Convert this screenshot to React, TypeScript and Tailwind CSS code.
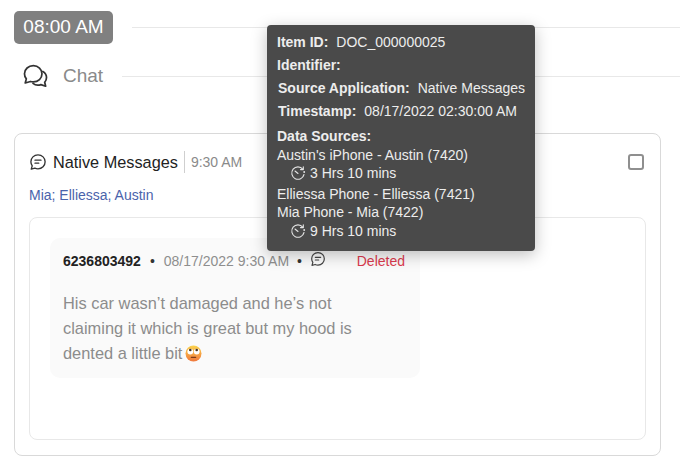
const font = { fontFamily: '"Liberation Sans", Arial, sans-serif' };

function MsgIcon({ size = 17, className = "" }: { size?: number; className?: string }) {
  return (
    <svg width={size} height={size} viewBox="0 0 24 24" fill="none" stroke="currentColor" strokeWidth="1.8" strokeLinecap="round" strokeLinejoin="round" className={className}>
      <path d="M12 2.500c5.400 0 9.500 4 9.500 9.300s-4.100 9.300-9.500 9.300c-1.500 0-2.900-.3-4.200-.9L3 21.500l1.300-4.400c-1.100-1.500-1.800-3.300-1.800-5.300 0-5.300 4.100-9.300 9.500-9.300z" />
      <path d="M8 9.500h8M8 13.500h5" />
    </svg>
  );
}

function ChatsIcon() {
  return (
    <svg width="27" height="27" viewBox="0 0 25 25" fill="none" stroke="#333" strokeWidth="1.600" strokeLinecap="round" strokeLinejoin="round" className="shrink-0">
      <path d="M10.500 2.500c4.500 0 8 3.200 8 7.500s-3.500 7.500-8 7.500c-1 0-1.900-.1-2.700-.4L3 18.500l1-3.800C2.900 13.400 2.300 11.800 2.300 10c0-4.300 3.700-7.500 8.200-7.500z" />
      <path d="M19.300 7.800c2.100 1.200 3.400 3.300 3.400 5.700 0 1.700-.6 3.200-1.700 4.400l.9 3.600-4.400-1.500c-2.700.9-5.500.4-7.300-1.200" />
    </svg>
  );
}

function TimerIcon() {
  return (
    <svg width="16" height="16" viewBox="0 0 16 16" fill="none" stroke="#e4e4e4" strokeWidth="1.100" strokeLinecap="round" strokeLinejoin="round">
      <path d="M12.800 4.200A6.200 6.200 0 1 0 14 9.500" />
      <path d="M13.300 1.800v2.800h-2.800" />
      <path d="M5 6l3 2.500" />
      <circle cx="14.200" cy="7" r=".4" fill="#e4e4e4" />
    </svg>
  );
}

function RollEyes() {
  return (
    <svg width="17" height="17" viewBox="0 0 17 17" className="ml-[3px] inline-block align-[-3px]">
      <defs>
        <linearGradient id="f" x1="0" y1="0" x2="0" y2="1">
          <stop offset="0" stopColor="#fbd34d" />
          <stop offset="1" stopColor="#f0783c" />
        </linearGradient>
      </defs>
      <circle cx="8.500" cy="8.500" r="8" fill="url(#f)" />
      <circle cx="5.300" cy="6.600" r="2.900" fill="#fff" />
      <circle cx="11.700" cy="6.600" r="2.900" fill="#fff" />
      <circle cx="5.300" cy="5" r="1.300" fill="#4a3520" />
      <circle cx="11.700" cy="5" r="1.300" fill="#4a3520" />
      <path d="M6.300 12.300h4.400" stroke="#7a3a1c" strokeWidth="1.200" strokeLinecap="round" />
    </svg>
  );
}

function Field({ label, value, className = "" }: { label: string; value?: string; className?: string }) {
  return (
    <div className={`flex h-[23px] items-center whitespace-nowrap ${className}`}>
      <span className="font-bold">{label}</span>
      {value && <span className="ml-[8px]">{value}</span>}
    </div>
  );
}

function Duration({ text }: { text: string }) {
  return (
    <div className="flex h-[18px] items-center gap-[4px] pl-[13px]">
      <TimerIcon />
      <span>{text}</span>
    </div>
  );
}

export default function App() {
  return (
    <div style={font} className="relative h-[465px] w-[680px] overflow-hidden bg-white">
      <div className="flex h-[55px] items-start pl-[14px] pt-[11px]">
        <div className="flex h-[33px] w-[99px] items-center justify-center rounded-[5px] bg-[#808080] text-[19px] text-white">08:00 AM</div>
        <div className="ml-[19px] mt-[16px] h-px flex-1 bg-[#e8e8e8]" />
      </div>
      <div className="flex h-[43px] items-center pl-[22px]">
        <ChatsIcon />
        <span className="ml-[14px] text-[19px] text-[#8a8a8a]">Chat</span>
        <div className="ml-[19px] h-px flex-1 bg-[#e8e8e8]" />
      </div>

      <div className="mx-[14px] mt-[35px] h-[323px] w-[647px] rounded-[8px] border border-[#d9d9d9] px-[14px]">
        <div className="flex h-[54px] items-center justify-between pt-[2px]">
          <div className="flex items-center">
            <MsgIcon size={18} className="text-[#333]" />
            <span className="ml-[6px] text-[16.300px] text-[#222]">Native Messages</span>
            <span className="mx-[6px] h-[22px] w-px bg-[#cfcfcf]" />
            <span className="text-[14px] text-[#8a8a8a]">9:30 AM</span>
          </div>
          <div className="mr-[2px] h-[16px] w-[16px] rounded-[3px] border-2 border-[#8f8f8f]" />
        </div>
        <div className="h-[29px] text-[14px] leading-[14px] text-[#4a63ab]">Mia; Elliessa; Austin</div>

        <div className="h-[223px] w-[617px] rounded-[8px] border border-[#e8e8e8] px-[20px] pt-[20px]">
          <div className="h-[140px] w-[370px] rounded-[10px] bg-[#fafafa] pl-[13px] pr-[14px] pt-[12px]">
            <div className="flex h-[22px] items-center whitespace-nowrap text-[14px]">
              <span className="font-bold text-[#222]">6236803492</span>
              <span className="mx-[9px] text-[#333]">•</span>
              <span className="text-[#8e8e8e]">08/17/2022 9:30 AM</span>
              <span className="mx-[8px] text-[#333]">•</span>
              <MsgIcon size={16} className="mb-[5px] text-[#444]" />
              <span className="ml-auto pr-[1px] text-[#dc3a4e]">Deleted</span>
            </div>
            <div className="mt-[19px] text-[16.400px] leading-[25px] text-[#8c8c8c]">
              His car wasn’t damaged and he’s not
              <br />
              claiming it which is great but my hood is
              <br />
              dented a little bit<RollEyes />
            </div>
          </div>
        </div>
      </div>

      <div className="absolute left-[267px] top-[25px] h-[226px] w-[268px] rounded-[4px] bg-[#4a4a4a] px-[10px] pt-[6px] text-[14px] text-[#ededed] shadow-[0_4px_16px_rgba(0,0,0,0.25)]">
        <Field label="Item ID:" value="DOC_000000025" />
        <Field label="Identifier:" />
        <Field label="Source Application:" value="Native Messages" className="pl-px" />
        <Field label="Timestamp:" value="08/17/2022 02:30:00 AM" className="pl-px" />
        <Field label="Data Sources:" className="pt-[3px]" />
        <div className="leading-[19px]">
          <div className="h-[18px]">Austin's iPhone - Austin (7420)</div>
          <Duration text="3 Hrs 10 mins" />
          <div className="mt-[3px] h-[18px]">Elliessa Phone - Elliessa (7421)</div>
          <div className="h-[19px]">Mia Phone - Mia (7422)</div>
          <Duration text="9 Hrs 10 mins" />
        </div>
      </div>
    </div>
  );
}
